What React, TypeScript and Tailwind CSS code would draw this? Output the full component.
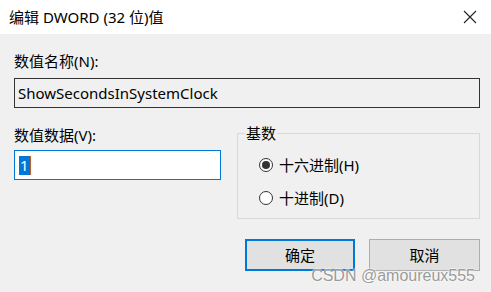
import React from "react";

const font = { fontFamily: '"Noto Sans", "Noto Sans CJK SC", sans-serif' };

function Radio({ checked, label }: { checked: boolean; label: string }) {
  return (
    <div className="flex items-center h-[20px]">
      <div className="w-[14px] h-[14px] rounded-full border border-[#333] bg-white flex items-center justify-center">
        {checked && <div className="w-[8px] h-[8px] rounded-full bg-[#333]" />}
      </div>
      <span className="ml-[6px] text-[15px] text-black leading-[20px]">{label}</span>
    </div>
  );
}

export default function App() {
  return (
    <div className="relative w-[491px] h-[292px] bg-[#f0f0f0] overflow-hidden text-black" style={font}>
      <div className="h-[34px] bg-white flex items-center justify-between pl-[9px] pr-[13px]">
        <span className="text-[15px] leading-[20px]">编辑 DWORD (32 位)值</span>
        <svg width="14" height="14" viewBox="0 0 14 14" className="mr-[1px]">
          <path d="M1 1 L13 13 M13 1 L1 13" stroke="#222" strokeWidth="1.1" />
        </svg>
      </div>
      <div className="px-[14px] pr-[11px]">
        <div className="mt-[17px] text-[15px] leading-[20px]">数值名称(N):</div>
        <div className="mt-[7px] h-[30px] border border-[#333] flex items-center pl-[3px] text-[15px]">
          ShowSecondsInSystemClock
        </div>
        <div className="flex mt-[15px]">
          <div className="w-[207px]">
            <div className="mt-[2px] text-[15px] leading-[20px]">数值数据(V):</div>
            <div className="mt-[5px] h-[30px] border border-[#0078d7] bg-white flex items-center pl-[4px]">
              <span className="bg-[#0078d7] text-white text-[15px] leading-[19px] px-[1px]">1</span>
              <span className="w-[1px] h-[19px] bg-[#c0602a]" />
            </div>
          </div>
          <fieldset className="ml-[16px] flex-1 h-[96px] border border-[#d8d8d8] pl-[7px] pt-[12px]">
            <legend className="px-[1px] text-[15px] leading-[20px] -mb-[2px]">基数</legend>
            <div className="flex flex-col gap-[13px] mt-[2px] ml-[14px]">
              <Radio checked label="十六进制(H)" />
              <Radio checked={false} label="十进制(D)" />
            </div>
          </fieldset>
        </div>
        <div className="flex justify-end gap-[14px] mt-[20px]">
          <div className="w-[110px] h-[32px] border-2 border-[#0078d7] bg-[#e1e1e1] flex items-center justify-center text-[15px]">
            确定
          </div>
          <div className="w-[111px] h-[32px] border border-[#adadad] bg-[#e1e1e1] flex items-center justify-center text-[15px]">
            取消
          </div>
        </div>
      </div>
      <div
        className="absolute right-[16px] top-[266px] text-[16px] leading-[20px] text-[#9a9a9a]"
        style={{ fontFamily: '"Liberation Sans", Arial, sans-serif', textShadow: "0 0 2px #fff, 0 0 2px #fff" }}
      >
        CSDN @amoureux555
      </div>
    </div>
  );
}
